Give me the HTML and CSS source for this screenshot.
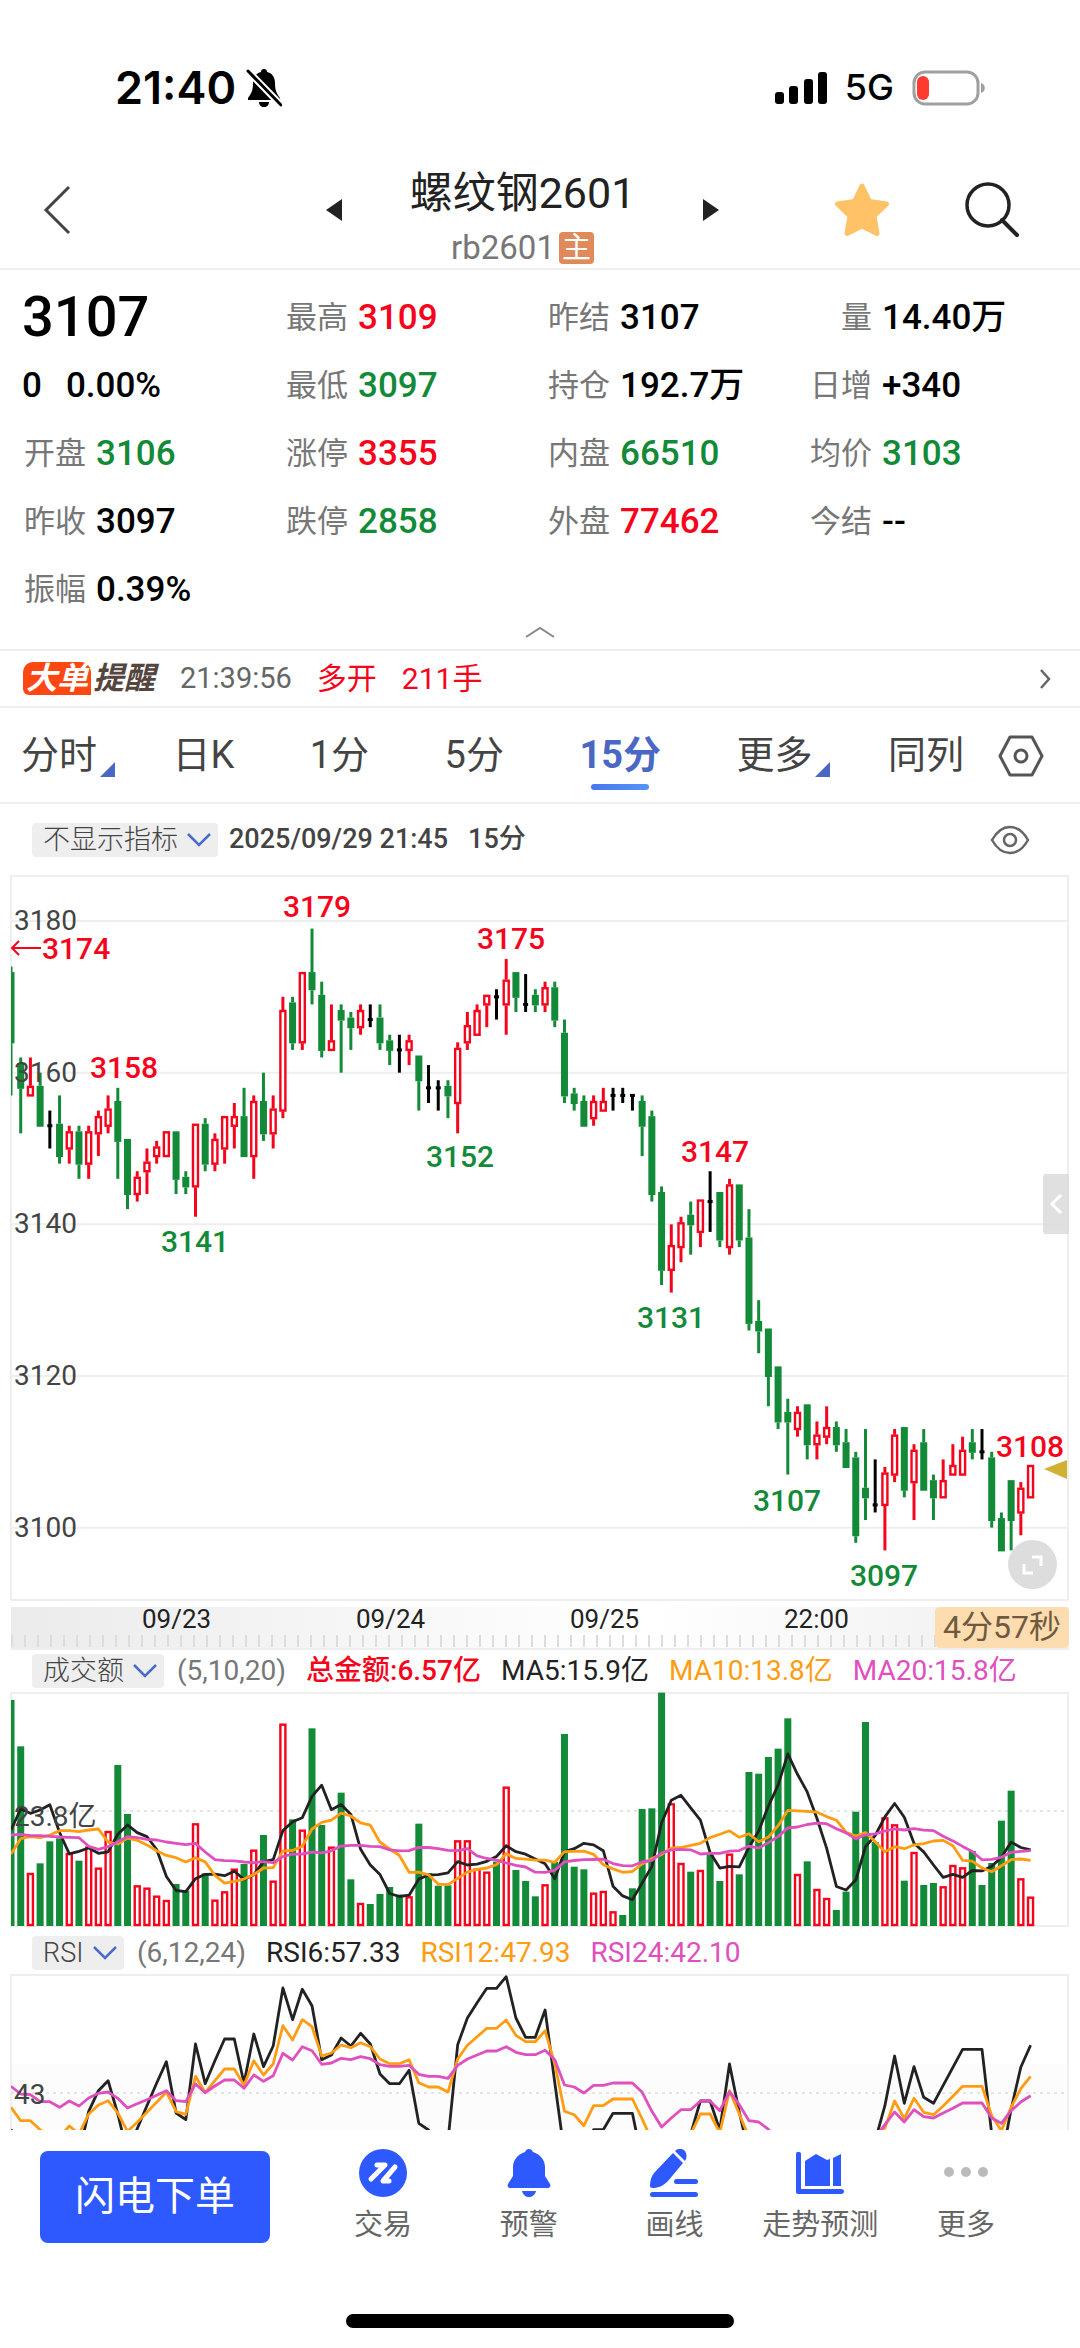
FILE: index.html
```
<!DOCTYPE html>
<html lang="zh-CN">
<head>
    <meta charset="utf-8">
    <meta name="viewport" content="width=device-width, initial-scale=1">
    <title>螺纹钢2601 15分</title>
    <link rel="stylesheet" href="styles.css">
</head>
<body>
    <div class="status">
        <div class="status-left">
            <span class="clock">21:40</span>
            <svg width="36" height="40" viewBox="0 0 36 40">
                <path d="M18 1c2 0 3 1 3 3 5 1 8 5 8 11 0 8 2 11 5 15v2H2v-2c3-4 5-7 5-15C7 9 10 5 15 4c0-2 1-3 3-3zM13 34h10c0 3-2 5-5 5s-5-2-5-5z"/>
                <path d="M2 3l33 34" stroke="#fff" stroke-width="7"/>
                <path d="M2 3l33 34" stroke="#000" stroke-width="3" stroke-linecap="round"/>
            </svg>
        </div>
        <div class="status-right">
            <svg width="52" height="34" viewBox="0 0 52 34">
                <rect x="0" y="21" width="9" height="12" rx="3"/><rect x="14" y="15" width="9" height="18" rx="3"/>
                <rect x="29" y="8" width="9" height="25" rx="3"/><rect x="43" y="1" width="9" height="32" rx="3"/>
            </svg>
            <span class="net">5G</span>
            <svg width="74" height="36" viewBox="0 0 74 36">
                <rect x="2" y="2" width="64" height="32" rx="11" fill="none" stroke="#a0a0a0" stroke-width="3"/>
                <path d="M69 13c5 1 5 9 0 10z" fill="#a0a0a0"/>
                <rect x="5" y="6" width="12" height="24" rx="6" fill="#ff3b30"/>
            </svg>
        </div>
    </div>

    <header class="top">
        <button class="icon-btn back" aria-label="返回">
            <svg width="28" height="50" viewBox="0 0 28 50"><path d="M26 2L3 25l23 23" fill="none" stroke="#444" stroke-width="3"/></svg>
        </button>
        <div class="picker">
            <button class="icon-btn" aria-label="上一个"><svg width="16" height="22" viewBox="0 0 16 22"><path d="M16 0v22L0 11z" fill="#222"/></svg></button>
            <div class="names">
                <h1>螺纹钢2601</h1>
                <p>rb2601<span class="main-tag">主</span></p>
            </div>
            <button class="icon-btn" aria-label="下一个"><svg width="16" height="22" viewBox="0 0 16 22"><path d="M0 0v22l16-11z" fill="#222"/></svg></button>
        </div>
        <div class="actions">
            <button class="icon-btn" aria-label="自选">
                <svg width="56" height="56" viewBox="0 0 56 56"><path d="M28 4l7.500 15.500 17 2.500-12.500 12 3 17.500L28 44l-15 7.500 3-17.500L3.500 22l17-2.500z" fill="#ffc266" stroke="#ffc266" stroke-width="5" stroke-linejoin="round"/></svg>
            </button>
            <button class="icon-btn" aria-label="搜索">
                <svg width="56" height="56" viewBox="0 0 56 56"><circle cx="24" cy="23" r="21" fill="none" stroke="#222" stroke-width="3.500"/><path d="M38 38l15 15" stroke="#222" stroke-width="4" stroke-linecap="round"/></svg>
            </button>
        </div>
    </header>

    <section class="quote">
        <dl class="grid">
            <div class="last">3107</div>
            <div><dt>最高</dt><dd class="up">3109</dd></div>
            <div><dt>昨结</dt><dd>3107</dd></div>
            <div><dt>量</dt><dd>14.40万</dd></div>
            <div class="change"><span>0</span><span>0.00%</span></div>
            <div><dt>最低</dt><dd class="down">3097</dd></div>
            <div><dt>持仓</dt><dd>192.7万</dd></div>
            <div><dt>日增</dt><dd>+340</dd></div>
            <div><dt>开盘</dt><dd class="down">3106</dd></div>
            <div><dt>涨停</dt><dd class="up">3355</dd></div>
            <div><dt>内盘</dt><dd class="down">66510</dd></div>
            <div><dt>均价</dt><dd class="down">3103</dd></div>
            <div><dt>昨收</dt><dd>3097</dd></div>
            <div><dt>跌停</dt><dd class="down">2858</dd></div>
            <div><dt>外盘</dt><dd class="up">77462</dd></div>
            <div><dt>今结</dt><dd>--</dd></div>
            <div><dt>振幅</dt><dd>0.39%</dd></div>
        </dl>
        <button class="icon-btn fold" aria-label="收起"><svg width="30" height="12" viewBox="0 0 30 12"><path d="M1 11L15 2l14 9" fill="none" stroke="#888" stroke-width="2"/></svg></button>
    </section>

    <a class="alert" href="#">
        <span class="alert-logo"><b>大单</b><i>提醒</i></span>
        <span class="alert-time">21:39:56</span>
        <span class="up">多开</span>
        <span class="up">211手</span>
        <svg width="12" height="20" viewBox="0 0 12 20"><path d="M2 1l8 9-8 9" fill="none" stroke="#666" stroke-width="2.500"/></svg>
    </a>

    <nav class="tabs">
        <div class="periods">
            <button class="more">分时</button>
            <button>日K</button>
            <button>1分</button>
            <button>5分</button>
            <button class="on">15分</button>
            <button class="more">更多</button>
            <button>同列</button>
        </div>
        <button aria-label="设置">
            <svg width="46" height="42" viewBox="0 0 46 42"><path d="M12 2h22l10 19-10 19H12L2 21z" fill="none" stroke="#555" stroke-width="3" stroke-linejoin="round"/><circle cx="23" cy="21" r="6" fill="none" stroke="#555" stroke-width="3"/></svg>
        </button>
    </nav>

    <div class="bar">
        <label class="chip"><select aria-label="主图指标"><option>不显示指标</option></select><svg width="24" height="14" viewBox="0 0 24 14"><path d="M1 1l11 11L23 1" fill="none" stroke="#4a6bcb" stroke-width="2.500"/></svg></label>
        <span class="when">2025/09/29 21:45</span>
        <span class="when">15分</span>
        <button class="icon-btn eye" aria-label="显示"><svg width="40" height="30" viewBox="0 0 40 30"><path d="M2 15C7 6 13 2 20 2s13 4 18 13c-5 9-11 13-18 13S7 24 2 15z" fill="none" stroke="#666" stroke-width="2.500"/><circle cx="20" cy="15" r="6" fill="none" stroke="#666" stroke-width="2.500"/></svg></button>
    </div>
    <div class="chart">
        <svg id="kline" viewBox="0 0 1080 726"></svg>
        <button class="drawer" aria-label="展开侧栏"><svg width="14" height="22" viewBox="0 0 14 22"><path d="M12 2L3 11l9 9" fill="none" stroke="#fff" stroke-width="3"/></svg></button>
        <button class="full" aria-label="全屏"><svg width="22" height="22" viewBox="0 0 22 22"><path d="M10 3h9v9M2 10v9h9" fill="none" stroke="#fff" stroke-width="3"/></svg></button>
    </div>
    <div class="axis">
        <span>09/23</span><span>09/24</span><span>09/25</span><span>22:00</span>
        <b>4分57秒</b>
    </div>

    <div class="bar small">
        <label class="chip"><select aria-label="副图指标一"><option>成交额</option></select><svg width="24" height="14" viewBox="0 0 24 14"><path d="M1 1l11 11L23 1" fill="none" stroke="#4a6bcb" stroke-width="2.500"/></svg></label>
        <span class="args">(5,10,20)</span>
        <span class="up total">总金额:6.57亿</span>
        <span class="m1">MA5:15.9亿</span>
        <span class="m2">MA10:13.8亿</span>
        <span class="m3">MA20:15.8亿</span>
    </div>
    <div class="chart"><svg id="amount" viewBox="0 0 1080 236"></svg></div>

    <div class="bar small rsi">
        <label class="chip"><select aria-label="副图指标二"><option>RSI</option></select><svg width="24" height="14" viewBox="0 0 24 14"><path d="M1 1l11 11L23 1" fill="none" stroke="#4a6bcb" stroke-width="2.500"/></svg></label>
        <span class="args">(6,12,24)</span>
        <span class="m1">RSI6:57.33</span>
        <span class="m2">RSI12:47.93</span>
        <span class="m3">RSI24:42.10</span>
    </div>
    <div class="chart"><svg id="rsi" viewBox="0 0 1080 156"></svg></div>

    <footer class="tools">
        <button class="order">闪电下单</button>
        <nav>
            <a href="#"><svg width="48" height="48" viewBox="0 0 48 48"><circle cx="24" cy="24" r="24" fill="#2e59ff"/><path d="M18 16h8L12 30M36 18L24 32h6" fill="none" stroke="#fff" stroke-width="5" stroke-linecap="round" stroke-linejoin="round"/></svg>交易</a>
            <a href="#"><svg width="48" height="48" viewBox="0 0 48 48" fill="#2e59ff"><path d="M24 0c2 0 3 1 4 3 7 2 12 8 12 15v9l5 8c1 2 0 4-2 4H5c-2 0-3-2-2-4l5-8v-9C8 11 13 5 20 3c1-2 2-3 4-3zM17 42h14c-1 4-4 6-7 6s-6-2-7-6z"/></svg>预警</a>
            <a href="#"><svg width="48" height="48" viewBox="0 0 48 48" fill="#2e59ff"><path d="M23 4l10 10L18 32c-5 5-10 7-15 7-2 0-3-1-3-2 0-5 1-9 4-13zM25 2c3-3 7-3 10 0 2 3 2 7 0 10z"/><rect x="24" y="30" width="24" height="5" rx="2.500"/><rect x="0" y="43" width="48" height="5" rx="2.500"/></svg>画线</a>
            <a href="#"><svg width="48" height="48" viewBox="0 0 48 48" fill="#2e59ff"><path d="M0 5c0-3 5-3 5 0v35h40c4 0 4 5 0 5H2c-1 0-2-1-2-2zM9 37V12l11-7 11 6 3-1v27zM37 37V9l8-4v32z"/></svg>走势预测</a>
            <a href="#"><svg width="48" height="48" viewBox="0 0 48 48" fill="#bbb"><circle cx="7" cy="23" r="5"/><circle cx="24" cy="23" r="5"/><circle cx="41" cy="23" r="5"/></svg>更多</a>
        </nav>
    </footer>
    <div class="home"></div>

    <script src="chart.js"></script>
</body>
</html>
```
FILE: styles.css
```
* {box-sizing: border-box;}
body {
    margin: 0;
    background: #fff;
    color: #000;
    font-family: Roboto, "Noto Sans CJK SC", sans-serif;
    font-size: 28px;
    line-height: 1.2;}
button, select {font: inherit; color: inherit; border: 0; padding: 0; background: none;}
a {color: inherit; text-decoration: none;}
svg {display: block; flex: none;}
h1, p, dl, dt, dd {margin: 0; font-weight: 400;}
.icon-btn {display: flex;}
.up {color: #f5041c;}
.down {color: #128a38;}
.m1 {color: #222;}
.m2 {color: #ff9c12;}
.m3 {color: #e04fbe;}

.status {
    display: flex;
    justify-content: space-between;
    align-items: center;
    height: 152px;
    padding: 24px 94px 0 115px;
    font-family: Inter, sans-serif;}
.status-left {display: flex; align-items: center; gap: 10px;}
.status-right {display: flex; align-items: center; gap: 18px;}
.clock {font-size: 45px; font-weight: 600;}
.net {font-size: 36px; font-weight: 500;}

.top {
    display: grid;
    grid-template-columns: 1fr 394px 1fr;
    align-items: center;
    height: 118px;
    padding: 0 60px 0 43px;
    border-bottom: 2px solid #eee;}
.picker {display: flex; justify-content: space-between; align-items: center; margin: 0 9px 0 -9px;}
.names {padding-top: 12px; text-align: center; color: #222;}
.names h1 {font-size: 43px; line-height: 54px;}
.names p {
    display: flex;
    justify-content: center;
    align-items: center;
    gap: 4px;
    margin-top: 10px;
    font-size: 33px;
    line-height: 36px;
    color: #777;}
.main-tag {
    padding: 0 3px;
    background: #e08a5b;
    border-radius: 4px;
    color: #fff;
    font-size: 29px;
    line-height: 32px;}
.actions {display: flex; justify-content: flex-end; gap: 74px;}

.quote {padding-top: 14px; border-bottom: 2px solid #eee;}
.grid {
    display: grid;
    grid-template-columns: repeat(4, 1fr);
    grid-auto-rows: 68px;
    align-items: center;
    padding: 0 10px 0 22px;}
.grid div {display: flex; align-items: center; gap: 10px; white-space: nowrap;}
.grid dt {width: 64px; text-align: right; color: #777; font-size: 31px;}
.grid dd, .change {font-size: 35px; font-weight: 500;}
.grid .last {font-size: 56px; font-weight: 500;}
.grid .change {gap: 24px;}
.fold {margin: 2px auto 11px;}

.alert {
    display: flex;
    align-items: center;
    gap: 25px;
    height: 57px;
    padding: 0 29px 0 23px;
    border-bottom: 2px solid #eee;
    font-size: 30px;}
.alert svg {margin-left: auto;}
.alert-logo {display: flex; align-items: center; gap: 2px; font-style: italic; font-size: 31px; line-height: 33px;}
.alert-logo b {padding: 0 3px; background: #ff4713; border-radius: 10px 10px 0 6px; color: #fff;}
.alert-logo i {font-weight: 700; color: #54453e;}
.alert-time {color: #666; font-size: 29px;}

.tabs {
    display: flex;
    align-items: center;
    gap: 34px;
    height: 96px;
    padding: 2px 36px 0 21px;
    border-bottom: 2px solid #eee;
    color: #444;
    font-size: 38px;}
.periods {flex: 1; display: flex; justify-content: space-between;}
.tabs button {position: relative;}
.tabs .on {color: #4a67c4; font-weight: 700;}
.tabs .on::after {
    content: '';
    position: absolute;
    left: 12px;
    right: 12px;
    bottom: -11px;
    height: 6px;
    border-radius: 3px;
    background: linear-gradient(90deg, #4b74ee, #5496f8);}
.tabs .more::after {
    content: '';
    position: absolute;
    right: -18px;
    bottom: 2px;
    border-left: 15px solid transparent;
    border-bottom: 15px solid #4a67c4;}

.bar {display: flex; align-items: center; gap: 20px; height: 71px; padding: 0 50px 0 32px; white-space: nowrap;}
.bar.small {height: 42px;}
.bar.rsi {height: 46px; padding-top: 3px;}
.chip {
    display: flex;
    align-items: center;
    gap: 9px;
    height: 34px;
    padding: 0 7px 0 11px;
    background: #eee;
    border-radius: 4px;
    color: #444;
    font-size: 27px;
    line-height: 34px;}
.chip select {appearance: none; font-weight: 300;}
.bar .when {color: #444; font-size: 27px; font-weight: 500;}
.bar .chip + .when {margin-left: -9px;}
.eye {margin-left: auto;}
.args {color: #777; margin-left: -7px;}
.total {font-weight: 500;}

.chart {position: relative;}
.chart svg {width: 100%;}
.chart text {font-size: 28px; fill: #444;}
.chart .mark {font-size: 30px; font-weight: 500;}
.chart .high {fill: #f5041c;}
.chart .low {fill: #128a38;}
.chart button {position: absolute; display: flex; align-items: center; justify-content: center; background: #ddd;}
.chart button svg {width: auto;}
.chart .drawer {right: 11px; top: 299px; width: 26px; height: 60px; border-radius: 3px 0 0 3px; opacity: 0.9;}
.chart .full {right: 23px; bottom: 12px; width: 49px; height: 49px; border-radius: 50%;}

.axis {
    position: relative;
    display: flex;
    height: 43px;
    margin: 6px 11px 0;
    padding-left: 57px;
    background:
        repeating-linear-gradient(90deg, #ddd 0 2px, transparent 2px 13px) 0 28px / 100% 12px no-repeat,
        linear-gradient(90deg, #ebebeb, #fff 60%, #fff 60%, #eee);
    border-bottom: 2px solid #eee;
    color: #222;
    line-height: 24px;}
.axis span {width: 214px; padding-left: 74px; font-size: 26px;}
.axis b {
    position: absolute;
    right: 0;
    top: 0;
    padding: 0 8px;
    background: #fddcb0;
    border-radius: 5px;
    color: #6f5a40;
    font-size: 32px;
    font-weight: 400;
    line-height: 41px;}

.tools {display: flex; align-items: center; padding: 19px 41px 0 40px;}
.order {width: 230px; height: 92px; border-radius: 8px; background: #2e59ff; color: #fff; font-size: 40px; white-space: nowrap;}
.tools nav {flex: 1; display: grid; grid-template-columns: repeat(5, 1fr); margin-left: 40px;}
.tools a {display: flex; flex-direction: column; align-items: center; gap: 8px; color: #666; font-size: 29px; line-height: 40px; white-space: nowrap;}
.home {width: 388px; height: 14px; margin: 69px auto 21px; border-radius: 7px; background: #000;}
```
FILE: chart.js
```
var UP = '#f5041c', DOWN = '#128a38', FLAT = '#000';
var STEP = 9.71, X0 = 11, LEFT = 11, RIGHT = 1068;

// colour, high, body top, body bottom, low (all + 3000)
var candles = `g174,173,164,157 g162,161,158,152 r162,158,157,157 g160,158,153,153 k155,153,153,150 g157,153,149,148
r153,152,150,148 g153,152,148,146 r153,152,148,146 r155,154,152,149 r157,155,153,152 g158,156,151,146 g151,151,144,142
r147,146,144,143 r150,148,147,144 r151,150,149,148 r152,152,149,149 g152,152,146,144 g147,146,145,144 r153,153,145,141
g154,153,148,147 r152,151,148,147 r154,154,150,148 r156,154,153,150 g158,154,149,149 r157,156,149,146 g160,156,152,151
r157,155,152,150 r170,168,155,154 g170,169,164,163 r173,173,164,163 g179,173,171,169 g172,170,163,162 r169,164,163,163
g169,168,167,160 g168,167,166,163 r169,168,166,165 k169,167,167,166 g169,167,164,163 g165,164,163,161 k165,163,163,160
r165,164,163,161 g162,162,159,155 k161,158,158,156 k159,158,158,155 g159,158,157,154 r164,163,156,152 r168,166,164,163
r169,168,165,165 r170,170,169,166 k171,170,170,167 r175,172,169,165 g173,173,170,168 k173,169,169,168 g171,170,169,168
r172,171,169,168 g172,171,167,166 g167,165,157,156 g158,157,156,155 g157,156,153,153 r157,156,154,153 r158,156,155,155
k158,157,157,155 k158,157,157,156 k157,157,157,155 g157,156,153,149 g155,154,144,143 g145,144,134,132 r140,137,134,131
r141,140,137,135 g143,141,140,136 r143,143,139,137 k147,143,143,139 g144,144,138,137 r146,145,137,136 g145,145,138,137
g142,138,127,126 g130,127,126,123 g126,126,120,116 g121,121,114,113 g117,115,114,107 r116,115,113,112 g116,116,111,109
r114,112,111,109 r116,113,112,111 g114,113,111,110 g113,111,108,108 g110,109,99,98 g113,105,104,101 k109,103,103,102
r108,107,103,97 r113,112,107,106 g113,113,105,104 r111,110,106,101 g113,111,105,105 g107,106,104,101 r109,106,104,104
r111,108,107,107 r112,110,107,107 g113,111,110,109 k113,110,110,109 g110,109,101,100 g102,101,97,97 g106,106,101,97
r106,105,102,99 r108,108,104,104`.split(/\s+/);

var amounts = [678,539,159,188,254,263,219,196,238,175,285,483,336,122,115,91,78,126,106,308,158,79,104,172,186,229,273,
136,607,320,289,593,303,238,400,140,69,66,96,117,94,89,307,158,121,122,257,257,172,163,193,418,168,135,89,125,192,576,
178,170,100,105,44,33,113,351,353,700,368,189,163,168,213,135,217,155,462,457,507,532,623,156,194,111,84,48,103,343,612,
252,326,305,136,222,123,129,119,183,176,225,123,189,316,406,143,88];
// averages of the bars whose history is off screen
var head5 = [288,351,338,348];
var head10 = [216,262,268,265,273,286,286,283,288];
var head20 = [273,275,271,271,269,267,266,265,239,230,238,253,268,265,260,258,252,248,244];

// distance below the panel's top edge, in thirds of a pixel
var rsi6 = [466,560,560,560,560,560,560,540,412,350,320,420,540,464,395,327,263,417,437,210,329,260,195,195,328,180,278,
216,42,137,46,95,257,243,192,216,178,210,300,329,329,289,448,468,540,500,212,132,86,43,43,8,132,190,190,108,326,540,540,
540,467,467,418,418,418,560,560,560,560,560,480,381,381,468,270,415,540,560,560,560,560,560,560,560,560,560,560,560,560,
500,395,246,388,278,370,388,334,280,226,226,226,480,560,406,280,214];
var rsi12 = [400,440,440,467,490,490,456,480,420,393,380,417,472,445,415,385,354,413,421,307,356,320,285,285,334,260,303,
270,155,198,137,158,246,237,213,221,206,218,255,269,269,257,326,339,339,354,255,214,188,163,163,138,184,203,203,170,270,
412,422,455,395,395,375,375,375,435,500,540,540,520,480,420,420,476,350,420,490,540,540,540,540,540,540,540,540,540,540,
540,540,490,462,381,434,373,415,422,396,367,337,337,337,425,470,400,344,307];
var rsi24 = [337,360,362,383,383,400,381,396,372,358,354,373,402,389,377,364,350,380,383,330,356,336,318,318,343,303,322,
305,238,258,218,230,271,267,253,257,248,254,272,277,277,274,301,307,307,313,274,255,243,231,231,218,235,242,242,229,257,
333,339,357,334,334,327,327,327,355,412,459,432,407,407,381,381,410,353,392,440,444,466,500,500,500,500,500,500,500,500,
500,500,490,452,414,444,407,428,432,417,403,387,387,387,432,448,410,384,365];

function xOf(i) {return X0 + i * STEP;}
function rect(x, y, w, h, fill, stroke) {
    return `<rect x="${x}" y="${y}" width="${w}" height="${h}" fill="${fill}"` + (stroke ? ` stroke="${stroke}" stroke-width="2.4"` : '') + '/>';
}
function line(x1, y1, x2, y2, colour, w, dash) {
    return `<line x1="${x1}" y1="${y1}" x2="${x2}" y2="${y2}" stroke="${colour}" stroke-width="${w}"` + (dash ? ` stroke-dasharray="${dash}"` : '') + '/>';
}
function text(x, y, str, cls, anchor) {
    return `<text x="${x}" y="${y}" class="${cls || ''}" text-anchor="${anchor || 'start'}">${str}</text>`;
}
function curve(ys, colour) {
    var pts = ys.map(function (y, i) {return xOf(i).toFixed(1) + ',' + y.toFixed(1);}).join(' ');
    return `<polyline points="${pts}" fill="none" stroke="${colour}" stroke-width="2.8" stroke-linejoin="round"/>`;
}
function frame(h) {return `<path d="M${LEFT} ${h}V1H${RIGHT}V${h}" fill="none" stroke="#eee" stroke-width="2"/>`;}
function clip(id, h, inner) {
    return `<clipPath id="${id}"><rect x="${LEFT}" y="0" width="1057" height="${h}"/></clipPath><g clip-path="url(#${id})">${inner}</g>`;
}

function drawKline() {
    var yOf = function (p) {return 46 + (180 - p) * 7.583;};
    var s = frame(725) + line(LEFT, 725, RIGHT, 725, '#eee', 2), c = '';
    [180, 160, 140, 120, 100].forEach(function (p) {s += line(LEFT, yOf(p), RIGHT, yOf(p), '#eee', 2);});
    candles.forEach(function (row, i) {
        var v = row.slice(1).split(',').map(Number), x = xOf(i);
        var col = {r: UP, g: DOWN, k: FLAT}[row[0]];
        var top = yOf(v[1]) - 2, bottom = yOf(v[2]) + 1;
        if (row[0] == 'k') {
            c += line(x, yOf(v[0]), x, yOf(v[3]), col, 3) + rect(x - 2.5, yOf(v[1]) - 1.5, 5, 3, col);
            return;
        }
        if (v[0] > v[1]) c += line(x, yOf(v[0]), x, top, col, 3);
        if (v[3] < v[2]) c += line(x, bottom, x, yOf(v[3]), col, 3);
        c += row[0] == 'r' ? rect(x - 2.5, top + 1, 5, bottom - top - 2, '#fff', col) : rect(x - 3.5, top, 7, bottom - top, col);
    });
    s += clip('k1', 726, c);
    [180, 160, 140, 120, 100].forEach(function (p) {s += text(14, yOf(p) + 9, 3000 + p);});
    s += `<path d="M41 73H12M19 66l-7 7 7 7" fill="none" stroke="${UP}" stroke-width="2"/>` + text(42, 84, '3174', 'mark high');
    [[317, 42, 3179], [124, 203, 3158], [511, 74, 3175], [715, 287, 3147], [1030, 582, 3108]].forEach(function (m) {
        s += text(m[0], m[1], m[2], 'mark high', 'middle');
    });
    [[195, 377, 3141], [460, 292, 3152], [671, 453, 3131], [787, 636, 3107], [884, 711, 3097]].forEach(function (m) {
        s += text(m[0], m[1], m[2], 'mark low', 'middle');
    });
    s += '<path d="M1044 594l23-9v19z" fill="#d0b132"/>';
    document.getElementById('kline').innerHTML = s;
}

function average(n, head) {
    return amounts.map(function (a, i) {
        if (i < n - 1) return 234 - head[i] / 3;
        var sum = 0;
        for (var j = i - n + 1; j <= i; j++) sum += amounts[j];
        return 234 - sum / n / 3;
    });
}
function drawAmount() {
    var s = frame(234) + line(LEFT, 234, RIGHT, 234, '#eee', 2) + line(LEFT, 119, RIGHT, 119, '#e4e4e4', 2, '3 4'), c = '';
    amounts.forEach(function (a, i) {
        var h = a / 3, x = xOf(i), red = candles[i][0] == 'r' || i == 62;
        c += red ? rect(x - 2.5, 235 - h, 5, h - 2, '#fff', UP) : rect(x - 3.5, 234 - h, 7, h, DOWN);
    });
    c += curve(average(5, head5), '#222') + curve(average(10, head10), '#ff9c12') + curve(average(20, head20), '#e04fbe');
    document.getElementById('amount').innerHTML = s + clip('k2', 236, c) + text(14, 134, '23.8亿');
}
function drawRsi() {
    var third = function (v) {return v / 3;};
    var c = curve(rsi6.map(third), '#222') + curve(rsi12.map(third), '#ff9c12') + curve(rsi24.map(third), '#e04fbe');
    document.getElementById('rsi').innerHTML = rect(LEFT, 90, 1057, 66, '#fcfcfc') + frame(156) +
        line(LEFT, 119, RIGHT, 119, '#e4e4e4', 2, '3 4') + clip('k3', 156, c) + text(14, 130, '43');
}
drawKline();
drawAmount();
drawRsi();
```
